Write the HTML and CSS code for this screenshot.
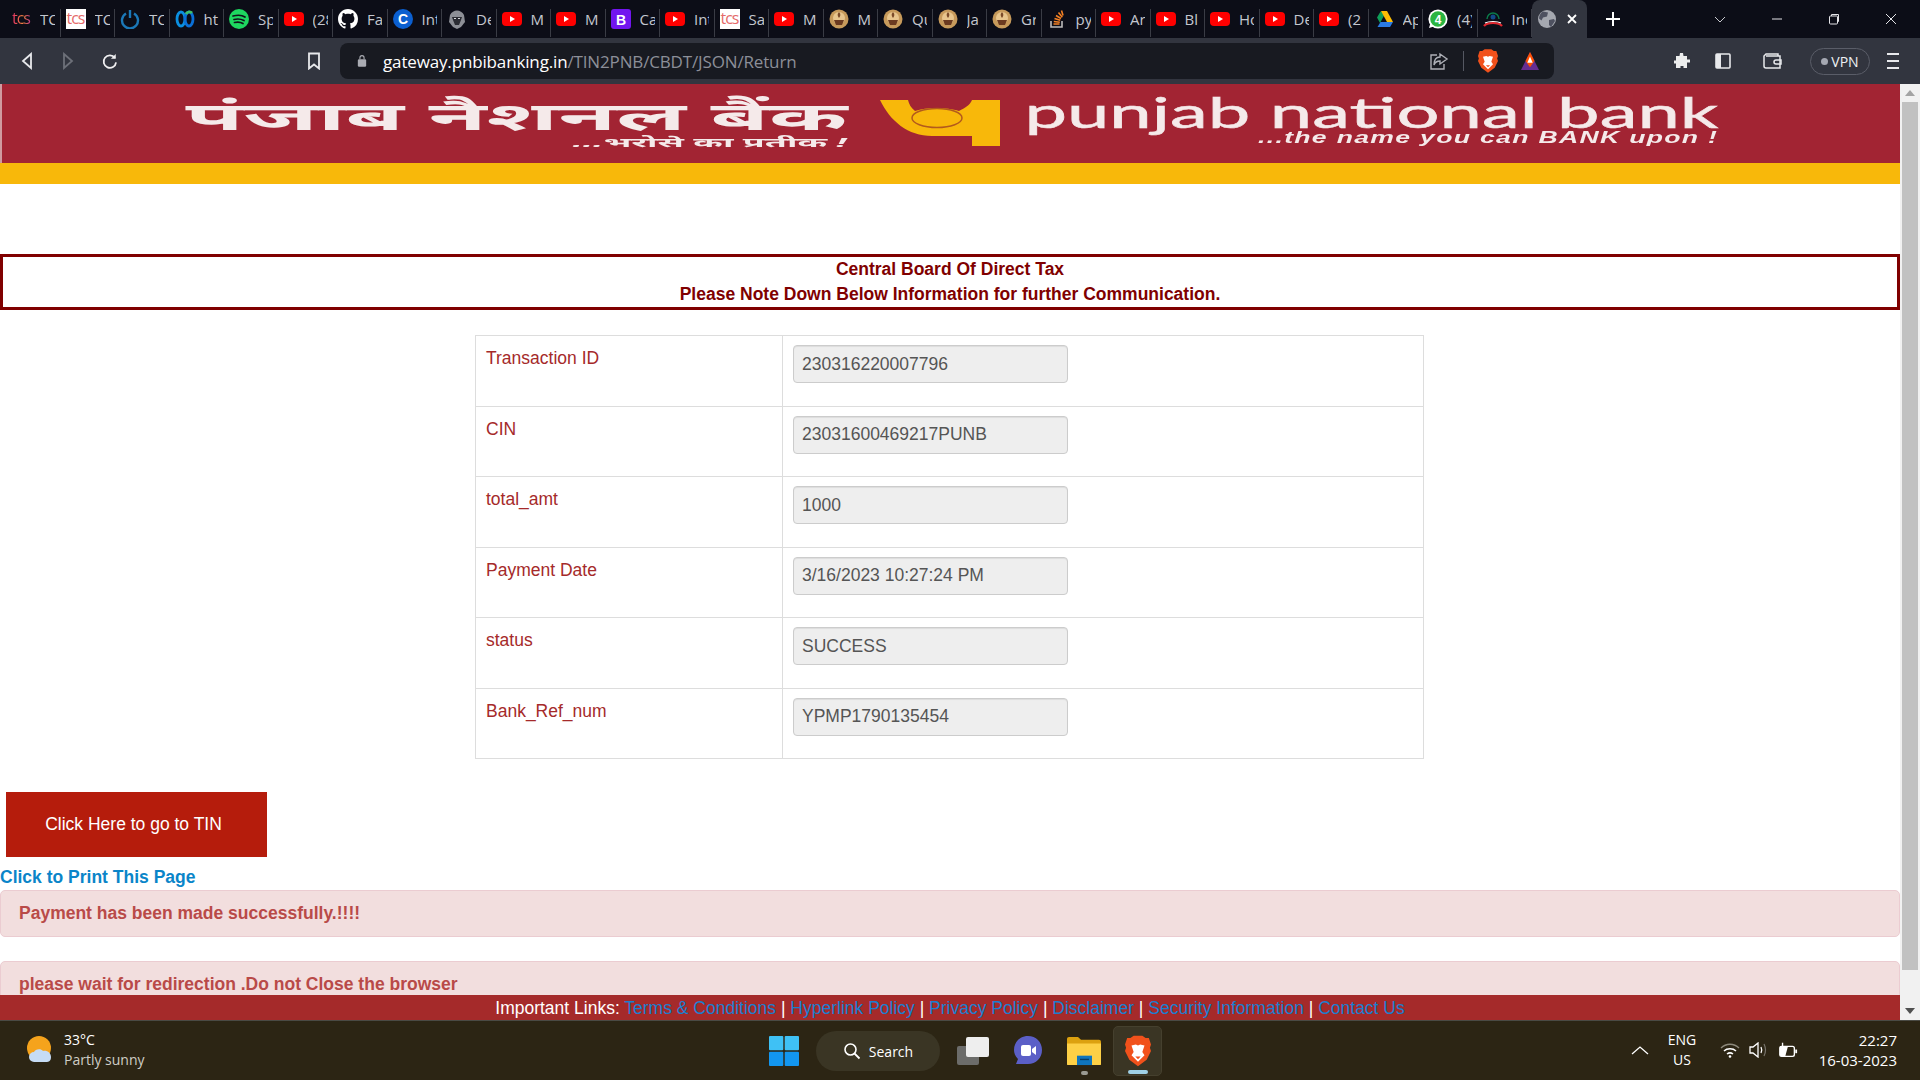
FILE: index.html
```html
<!DOCTYPE html>
<html lang="en">
<head>
    <meta charset="UTF-8">
    <title>Punjab National Bank - Return</title>
    <link rel="stylesheet" href="styles.css">
</head>
<body>
    <svg class="defs" width="0" height="0">
        <symbol id="yt" viewBox="0 0 20 20"><rect y="3" width="20" height="14" rx="4" fill="#f00"/><path d="M8 7l5 3-5 3z" fill="#fff"/></symbol>
        <symbol id="lamp" viewBox="0 0 20 20"><circle cx="10" cy="10" r="9.500" fill="#c79a5b"/><circle cx="10" cy="9" r="6" fill="#e8c58d"/><path d="M5 11h10l-2 5H7z" fill="#6b3a20"/><path d="M10 3c2 2 1.600 4 0 6-1.600-2-2-4 0-6z" fill="#7a4a28"/></symbol>
        <symbol id="github" viewBox="0 0 16 16"><path fill="#fff" d="M8 0C3.58 0 0 3.58 0 8c0 3.54 2.29 6.53 5.470 7.59.4.07.55-.17.55-.38 0-.19-.01-.82-.01-1.49-2.01.37-2.53-.49-2.69-.94-.09-.23-.48-.94-.82-1.13-.28-.15-.68-.52-.01-.53.63-.01 1.08.58 1.23.82.72 1.21 1.87.87 2.33.66.07-.52.28-.87.51-1.07-1.78-.2-3.64-.89-3.64-3.95 0-.87.31-1.59.82-2.15-.08-.2-.36-1.02.08-2.12 0 0 .67-.21 2.2.82.64-.18 1.32-.27 2-.27.68 0 1.36.09 2 .27 1.53-1.04 2.2-.82 2.2-.82.44 1.1.16 1.92.08 2.12.51.56.82 1.27.82 2.15 0 3.07-1.87 3.75-3.65 3.95.29.25.54.73.54 1.48 0 1.07-.01 1.93-.01 2.2 0 .21.15.46.55.38A8.013 8.013 0 0016 8c0-4.42-3.58-8-8-8z"/></symbol>
        <symbol id="brave" viewBox="0 0 24 28"><path d="M5 2l3-2h8l3 2h3l2 6-1 3 1 3-4 8-8 6-8-6-4-8 1-3-1-3 2-6z" fill="#f1511b"/><path d="M6 9l4-1 2 1 2-1 4 1-2 6 2 3-6 6-6-6 2-3z" fill="#fff"/><path d="M9.500 19h5L12 21.500z" fill="#f1511b"/></symbol>
    </svg>

    <div class="window">
        <div class="tabstrip">
            <div class="tab"><span class="tcs">tcs</span><span class="tab-title">TC</span></div>
            <div class="tab"><span class="tcs tcs-white">tcs</span><span class="tab-title">TC</span></div>
            <div class="tab"><svg class="fav" viewBox="0 0 20 20"><path d="M6 4.500a8 8 0 1 0 8 0" fill="none" stroke="#1b78b8" stroke-width="2.400"/><path d="M10 1v8" stroke="#1b78b8" stroke-width="2.400"/></svg><span class="tab-title">TC</span></div>
            <div class="tab"><svg class="fav" viewBox="0 0 20 20"><ellipse cx="6" cy="10" rx="4" ry="7" fill="none" stroke="#0b8fe0" stroke-width="2.800"/><ellipse cx="14" cy="10" rx="4" ry="7" fill="none" stroke="#0a6fd6" stroke-width="2.800"/><path d="M11 5c1-2 4-3 6-1" fill="none" stroke="#3fc06a" stroke-width="2.800"/></svg><span class="tab-title">ht</span></div>
            <div class="tab"><svg class="fav" viewBox="0 0 20 20"><circle cx="10" cy="10" r="10" fill="#1ed760"/><path d="M4 7c4-1 9-1 12 1M5 10.500c4-1 7-.5 10 1M5.500 13.500c3-.7 6-.5 8.500 1" fill="none" stroke="#10121a" stroke-width="1.700" stroke-linecap="round"/></svg><span class="tab-title">Sp</span></div>
            <div class="tab"><svg class="fav"><use href="#yt"/></svg><span class="tab-title">(28</span></div>
            <div class="tab"><svg class="fav"><use href="#github"/></svg><span class="tab-title">Fa</span></div>
            <div class="tab"><svg class="fav" viewBox="0 0 20 20"><circle cx="10" cy="10" r="10" fill="#0b5fd0"/><text x="10" y="15" class="fav-letter">C</text></svg><span class="tab-title">Int</span></div>
            <div class="tab"><svg class="fav" viewBox="0 0 20 20"><path d="M3 6c3-6 11-6 14 0l1 7-4 5-4 2-4-2-4-5z" fill="#8d8f96"/><path d="M5 8h10l-1 3-2 5H8l-2-5z" fill="#2b2c33"/><path d="M7 9.500h2M11 9.500h2" stroke="#d8d8dc"/></svg><span class="tab-title">De</span></div>
            <div class="tab"><svg class="fav"><use href="#yt"/></svg><span class="tab-title">M</span></div>
            <div class="tab"><svg class="fav"><use href="#yt"/></svg><span class="tab-title">M</span></div>
            <div class="tab"><svg class="fav" viewBox="0 0 20 20"><rect width="20" height="20" rx="3" fill="#7215ef"/><text x="10" y="15.500" class="fav-letter">B</text></svg><span class="tab-title">Ca</span></div>
            <div class="tab"><svg class="fav"><use href="#yt"/></svg><span class="tab-title">Int</span></div>
            <div class="tab"><span class="tcs tcs-white">tcs</span><span class="tab-title">Sa</span></div>
            <div class="tab"><svg class="fav"><use href="#yt"/></svg><span class="tab-title">M</span></div>
            <div class="tab"><svg class="fav"><use href="#lamp"/></svg><span class="tab-title">M</span></div>
            <div class="tab"><svg class="fav"><use href="#lamp"/></svg><span class="tab-title">Qu</span></div>
            <div class="tab"><svg class="fav"><use href="#lamp"/></svg><span class="tab-title">Ja</span></div>
            <div class="tab"><svg class="fav"><use href="#lamp"/></svg><span class="tab-title">Gr</span></div>
            <div class="tab"><svg class="fav" viewBox="0 0 20 20"><path d="M4 12v6h11v-6" fill="none" stroke="#bcbbbb" stroke-width="1.600"/><path d="M6.500 15h6M6.800 12.500l6 .8M7.500 9.500l5.800 1.800M9 6.500l5 3M11.500 3.500l3.800 4.800M14.500 1.500l1.500 5" stroke="#f48024" stroke-width="1.600" fill="none"/></svg><span class="tab-title">py</span></div>
            <div class="tab"><svg class="fav"><use href="#yt"/></svg><span class="tab-title">Ar</span></div>
            <div class="tab"><svg class="fav"><use href="#yt"/></svg><span class="tab-title">Bl</span></div>
            <div class="tab"><svg class="fav"><use href="#yt"/></svg><span class="tab-title">Ho</span></div>
            <div class="tab"><svg class="fav"><use href="#yt"/></svg><span class="tab-title">De</span></div>
            <div class="tab"><svg class="fav"><use href="#yt"/></svg><span class="tab-title">(2</span></div>
            <div class="tab"><svg class="fav" viewBox="0 0 20 20"><path d="M7 2h6l-3.500 6-3 5.500L3.500 8z" fill="#0f9d58" transform="translate(-.5 .5)"/><path d="M7 2h6l6 11h-6z" fill="#fbbc04"/><path d="M6.500 13H19l-3 5H3.500z" fill="#2b7be4"/></svg><span class="tab-title">Ap</span></div>
            <div class="tab"><svg class="fav" viewBox="0 0 20 20"><circle cx="10" cy="10" r="9.600" fill="#fff"/><circle cx="10" cy="10" r="7.800" fill="#2ab540"/><path d="M1 19l1.500-5 3.500 3.500z" fill="#fff"/><text x="10" y="14.500" class="fav-letter fav-small">4</text></svg><span class="tab-title">(4)</span></div>
            <div class="tab"><svg class="fav" viewBox="0 0 20 20"><path d="M4 10a6 6 0 0 1 12 0" fill="none" stroke="#0b7a4a" stroke-width="1.500"/><circle cx="10" cy="8" r="2.500" fill="#124a8a"/><path d="M1 17c3-4 15-4 18 0" fill="none" stroke="#e3262e" stroke-width="2.200"/><path d="M2 14c4-2 12-2 16 0" fill="none" stroke="#fff" stroke-width="1.200"/></svg><span class="tab-title">Inc</span></div>
            <div class="tab tab-active">
                <svg class="fav fav-globe" viewBox="0 0 20 20"><circle cx="10" cy="10" r="9" fill="#a5a8b0"/><path d="M6 2.500l5 1-1 4-4 1-1.500 3-2.500-2c0-3 2-6 4-7zM12 11l5-1 1 2-4 6-2-2z" fill="#4e5160"/></svg>
                <svg class="tab-close" viewBox="0 0 12 12"><path d="M2 2l8 8M10 2l-8 8" stroke="#fff" stroke-width="1.800"/></svg>
            </div>
            <svg class="newtab" viewBox="0 0 16 16"><path d="M8 1v14M1 8h14" stroke="#fff" stroke-width="2"/></svg>
            <div class="win-controls">
                <svg viewBox="0 0 12 12"><path d="M1 4l5 5 5-5" fill="none" stroke="#c8c9ce"/></svg>
                <svg viewBox="0 0 12 12"><path d="M1 6h10" stroke="#e4e4e8"/></svg>
                <svg viewBox="0 0 12 12"><rect x="1.500" y="3" width="8" height="8" rx="1" fill="none" stroke="#e4e4e8"/><path d="M3.500 3V1.500h7v7H9.500" fill="none" stroke="#e4e4e8"/></svg>
                <svg viewBox="0 0 12 12"><path d="M1 1l10 10M11 1L1 11" stroke="#e4e4e8"/></svg>
            </div>
        </div>

        <div class="toolbar">
            <div class="nav-btns">
                <svg viewBox="0 0 14 18"><path d="M11 2L3 9l8 7z" fill="none" stroke="#e8e9ec" stroke-width="1.800"/></svg>
                <svg viewBox="0 0 14 18"><path d="M3 2l8 7-8 7z" fill="none" stroke="#6d7079" stroke-width="1.800"/></svg>
                <svg class="reload" viewBox="0 0 18 18"><path d="M14.500 5.500a7 7 0 1 0 1.300 5" fill="none" stroke="#f0f0f2" stroke-width="2"/><path d="M15.500 1v5.500H10z" fill="#f0f0f2"/></svg>
            </div>
            <svg class="bookmark" viewBox="0 0 14 18"><path d="M2 1.500h10v15l-5-4-5 4z" fill="none" stroke="#e8e9ec" stroke-width="1.800"/></svg>
            <div class="urlbar">
                <svg class="lock" viewBox="0 0 12 16"><rect x="1" y="6" width="10" height="9" rx="1.500" fill="#aaacb3"/><path d="M3.500 6V4a2.500 2.500 0 0 1 5 0v2" fill="none" stroke="#aaacb3" stroke-width="1.300"/></svg>
                <span class="url"><span class="url-host">gateway.pnbibanking.in</span>/TIN2PNB/CBDT/JSON/Return</span>
                <svg class="share" viewBox="0 0 20 20"><path d="M8 4H2v14h13v-5" fill="none" stroke="#aeb0b7" stroke-width="1.400"/><path d="M11 3l7 5-7 5v-3c-3 0-5 1-6 4 0-5 2-8 6-8z" fill="none" stroke="#aeb0b7" stroke-width="1.400"/></svg>
                <span class="url-sep"></span>
                <svg class="shield"><use href="#brave"/></svg>
                <svg class="bat" viewBox="0 0 22 20"><path d="M11 0l10 20H1z" fill="#662d91"/><path d="M11 0l5 10 -5 7-5-7z" fill="#ff5000"/><path d="M11 5l3 7h-6z" fill="#fff"/></svg>
            </div>
            <div class="tool-right">
                <svg class="tool-icon" viewBox="0 0 18 18"><path d="M7 1h3l.5 3H14v3.500h3v3h-3V16h-3.500v-2h-3v2H3v-4.500H1v-3h2V4h3.500z" fill="#eceded"/></svg>
                <svg class="tool-icon" viewBox="0 0 18 18"><rect x="2" y="2" width="14" height="14" rx="1" fill="none" stroke="#e8e9ec" stroke-width="1.600"/><rect x="2" y="2" width="5" height="14" fill="#e8e9ec"/></svg>
                <svg class="tool-icon tool-wallet" viewBox="0 0 20 18"><path d="M3 4h14v12H3a2 2 0 0 1-2-2V4l2-2h12v2" fill="none" stroke="#e8e9ec" stroke-width="1.500"/><path d="M18 8h-5a2 2 0 0 0 0 4h5z" fill="none" stroke="#e8e9ec" stroke-width="1.500"/></svg>
                <div class="vpn"><span class="vpn-dot"></span>VPN</div>
                <div class="hamburger"><span></span><span></span><span></span></div>
            </div>
        </div>

        <div class="viewport">
            <div class="content">
                <div class="banner">
                    <div class="brand-hi">
                        <span class="brand-main">पंजाब नैशनल बैंक</span>
                        <span class="brand-tag">...भरोसे का प्रतीक !</span>
                    </div>
                    <svg class="pnb-logo" viewBox="0 0 120 48"><path d="M0 1h28c1 4 3 8 7 11 6-2 13-3 21-3s17 1 23 3c6-3 11-6 13-11h28v46H92V37H52C28 37 10 22 0 1z" fill="#f8b80a"/><ellipse cx="57" cy="19" rx="25" ry="9.500" fill="none" stroke="#b35a1c" stroke-width="1.500"/></svg>
                    <div class="brand-en">
                        <span class="brand-en-main">punjab national bank</span>
                        <span class="brand-en-tag">...the name you can BANK upon !</span>
                    </div>
                </div>
                <div class="banner-stripe"></div>

                <div class="notice">
                    <div>Central Board Of Direct Tax</div>
                    <div>Please Note Down Below Information for further Communication.</div>
                </div>

                <table class="details">
                    <tr><td class="lbl">Transaction ID</td><td><input class="field" value="230316220007796" readonly></td></tr>
                    <tr><td class="lbl">CIN</td><td><input class="field" value="23031600469217PUNB" readonly></td></tr>
                    <tr><td class="lbl">total_amt</td><td><input class="field" value="1000" readonly></td></tr>
                    <tr><td class="lbl">Payment Date</td><td><input class="field" value="3/16/2023 10:27:24 PM" readonly></td></tr>
                    <tr><td class="lbl">status</td><td><input class="field" value="SUCCESS" readonly></td></tr>
                    <tr><td class="lbl">Bank_Ref_num</td><td><input class="field" value="YPMP1790135454" readonly></td></tr>
                </table>

                <button class="tin-btn">Click Here to go to TIN</button>
                <a class="print-link" href="#">Click to Print This Page</a>
                <div class="alert">Payment has been made successfully.!!!!</div>
                <div class="alert alert-second">please wait for redirection .Do not Close the browser</div>

                <div class="page-footer">
                    Important Links: <a href="#">Terms &amp; Conditions</a> | <a href="#">Hyperlink Policy</a> | <a href="#">Privacy Policy</a> | <a href="#">Disclaimer</a> | <a href="#">Security Information</a> | <a href="#">Contact Us</a>
                </div>
            </div>
            <div class="scrollbar">
                <span class="arrow arrow-up"></span>
                <div class="thumb"></div>
                <span class="arrow arrow-down"></span>
            </div>
        </div>

        <div class="taskbar">
            <div class="weather">
                <svg viewBox="0 0 30 30" class="weather-icon"><circle cx="14" cy="13" r="12" fill="#f5a31c"/><path d="M9 27a5 5 0 0 1 0-10c1-3 7-4 9-1 4-1 8 2 8 6s-2 5-5 5z" fill="#c6dcf5"/></svg>
                <div class="weather-text">
                    <div>33°C</div>
                    <div class="weather-sub">Partly sunny</div>
                </div>
            </div>
            <div class="task-center">
                <svg class="start" viewBox="0 0 30 30"><g fill="#3fc1f5"><rect width="14.300" height="14.300" rx="1"/><rect x="15.700" width="14.300" height="14.300" rx="1"/></g><g fill="#1296f0"><rect y="15.700" width="14.300" height="14.300" rx="1"/><rect x="15.700" y="15.700" width="14.300" height="14.300" rx="1"/></g></svg>
                <div class="search-pill">
                    <svg viewBox="0 0 18 18"><circle cx="7.500" cy="7.500" r="5.500" fill="none" stroke="#fff" stroke-width="1.600"/><path d="M11.500 11.500L16.500 16.500" stroke="#fff" stroke-width="1.800"/></svg>
                    Search
                </div>
                <svg class="task-icon taskview" viewBox="0 0 32 28"><rect y="9" width="22" height="19" rx="2" fill="#6c6c6a"/><rect x="9" width="23" height="20" rx="2" fill="#eeeeee"/></svg>
                <svg class="task-icon meet" viewBox="0 0 28 30"><path d="M14 0c8 0 14 6 14 14s-6 14-14 14H2l2-5C1 20 0 17 0 14 0 6 6 0 14 0z" fill="#5b5fc7"/><rect x="7" y="9" width="10" height="11" rx="2" fill="#fff"/><path d="M18 13l4-3v9l-4-3z" fill="#fff"/></svg>
                <div class="task-slot">
                    <svg class="task-icon folder" viewBox="0 0 34 32" preserveAspectRatio="none"><path d="M0 3a2 2 0 0 1 2-2h9l3 3h18a2 2 0 0 1 2 2v6H0z" fill="#dca10f"/><path d="M0 8h34v22a1 1 0 0 1-1 1H1a1 1 0 0 1-1-1z" fill="#fdd046"/><rect x="10" y="21" width="15" height="10" fill="#0f75bd"/><path d="M13 25h9" stroke="#063d66" stroke-width="1.500"/></svg>
                    <span class="task-dot"></span>
                </div>
                <div class="task-slot task-active">
                    <svg class="task-icon shield-big"><use href="#brave"/></svg>
                    <span class="task-dot task-dot-on"></span>
                </div>
            </div>
            <div class="tray">
                <svg class="tray-chevron" viewBox="0 0 18 10"><path d="M1 9l8-7 8 7" fill="none" stroke="#fff" stroke-width="1.300"/></svg>
                <div class="lang"><div>ENG</div><div>US</div></div>
                <svg class="tray-icon" viewBox="0 0 20 16"><path d="M1 6c5-5 13-5 18 0" fill="none" stroke="#8d897c" stroke-width="1.300"/><path d="M4 9c3-3 9-3 12 0M7 12c2-1.500 4-1.500 6 0" fill="none" stroke="#fff" stroke-width="1.500"/><circle cx="10" cy="14.500" r="1.300" fill="#fff"/></svg>
                <svg class="tray-icon" viewBox="0 0 20 16"><path d="M1 5h3l5-4v14l-5-4H1z" fill="none" stroke="#fff" stroke-width="1.300"/><path d="M12 5c1 2 1 4 0 6" fill="none" stroke="#fff" stroke-width="1.300"/><path d="M15 2c2 4 2 8 0 12" fill="none" stroke="#77736a" stroke-width="1.200"/></svg>
                <svg class="tray-icon" viewBox="0 0 22 16"><rect x="2" y="4" width="16" height="11" rx="2" fill="none" stroke="#fff" stroke-width="1.500"/><path d="M2 4h9l-3 11H4a2 2 0 0 1-2-2z" fill="#fff"/><rect x="19" y="7.500" width="2" height="4" fill="#fff"/><path d="M5 0v4" stroke="#fff" stroke-width="1.500"/></svg>
                <div class="clock"><div>22:27</div><div>16-03-2023</div></div>
            </div>
        </div>
    </div>
</body>
</html>
```
FILE: styles.css
```css
* {
    margin: 0;
    padding: 0;
    box-sizing: border-box;
}
body {
    background: #fff;
    font-family: "Liberation Sans", Arial, sans-serif;
    overflow: hidden;
}
.defs {
    position: absolute;
}
.window {
    width: 1920px;
    height: 1080px;
    display: flex;
    flex-direction: column;
}

/* tab strip */
.tabstrip {
    height: 38px;
    background: #0c0d17;
    display: flex;
    align-items: stretch;
    padding-left: 6px;
}
.tab {
    width: 54.500px;
    display: flex;
    align-items: center;
    padding: 0 5px;
    position: relative;
    color: #c4c7cf;
    flex: none;
}
.tab::after {
    content: "";
    position: absolute;
    right: 0;
    top: 9px;
    bottom: 1px;
    width: 1px;
    background: #3a3c45;
}
.fav {
    width: 20px;
    height: 20px;
    flex: none;
}
.fav-letter {
    font: bold 14px "Liberation Sans", sans-serif;
    fill: #fff;
    text-anchor: middle;
}
.fav-small {
    font-size: 12px;
}
.tab-title {
    font: 15px "Open Sans", sans-serif;
    width: 15px;
    margin-left: 9px;
    overflow: hidden;
    white-space: nowrap;
}
.tcs {
    width: 20px;
    height: 20px;
    flex: none;
    font: 16px/19px "Open Sans", sans-serif;
    letter-spacing: -1px;
    text-align: center;
    overflow: hidden;
    background: linear-gradient(90deg, #e3286b, #f0823c 60%, #b6308d);
    background-clip: text;
    -webkit-background-clip: text;
    color: transparent;
}
.tcs-white {
    background: #fff;
    color: #e56a6a;
}
.tab-active {
    width: 55px;
    background: #32353f;
    border-radius: 8px 8px 0 0;
}
.tab-active::after {
    display: none;
}
.tab-close {
    width: 12px;
    height: 12px;
    margin-left: 9px;
}
.newtab {
    width: 16px;
    height: 16px;
    align-self: center;
    margin-left: 18px;
}
.win-controls {
    margin-left: auto;
    display: flex;
    align-items: center;
    gap: 45px;
    padding-right: 23px;
}
.win-controls svg {
    width: 12px;
    height: 12px;
}

/* toolbar */
.toolbar {
    height: 46px;
    background: #32353f;
    display: flex;
    align-items: center;
}
.nav-btns {
    display: flex;
    gap: 27px;
    padding-left: 20px;
    align-items: center;
}
.nav-btns svg {
    width: 14px;
    height: 18px;
}
.nav-btns .reload {
    width: 16px;
}
.bookmark {
    width: 14px;
    height: 18px;
    margin-left: 189px;
}
.urlbar {
    width: 1214px;
    height: 36px;
    margin-left: 19px;
    background: #181a21;
    border-radius: 8px;
    display: flex;
    align-items: center;
    padding-left: 17px;
}
.lock {
    width: 10px;
    height: 14px;
}
.url {
    font: 17px "Open Sans", sans-serif;
    color: #8c8f98;
    margin-left: 16px;
    letter-spacing: -0.150px;
}
.url-host {
    color: #fff;
}
.share {
    width: 20px;
    height: 20px;
    margin-left: auto;
}
.url-sep {
    width: 1px;
    height: 20px;
    background: #555862;
    margin-left: 14px;
}
.shield {
    width: 20px;
    height: 24px;
    margin-left: 14px;
}
.bat {
    width: 20px;
    height: 18px;
    margin-left: 22px;
    margin-right: 14px;
}
.tool-right {
    display: flex;
    align-items: center;
    margin-left: 119px;
}
.tool-icon {
    width: 18px;
    height: 18px;
    margin-right: 23px;
}
.tool-wallet {
    width: 20px;
    margin-left: 8px;
    margin-right: 27px;
}
.vpn {
    width: 60px;
    height: 27px;
    border: 1px solid #5a5d68;
    border-radius: 14px;
    display: flex;
    align-items: center;
    justify-content: center;
    gap: 3px;
    font: 14px "Open Sans", sans-serif;
    color: #eef0f4;
}
.vpn-dot {
    width: 7px;
    height: 7px;
    border-radius: 50%;
    background: #a5a8b2;
}
.hamburger {
    width: 12px;
    margin-left: 17px;
    display: flex;
    flex-direction: column;
    gap: 5px;
}
.hamburger span {
    height: 2px;
    background: #e8e9ec;
}

/* page */
.viewport {
    flex: 1;
    display: flex;
    min-height: 0;
}
.content {
    width: 1900px;
    position: relative;
    overflow: hidden;
}
.banner {
    height: 79px;
    background: #a22433;
    display: flex;
    align-items: flex-start;
    padding-left: 183px;
    border-left: 2px solid #d09aa0;
    color: #f5eaea;
}
.brand-hi {
    width: 662px;
    display: flex;
    flex-direction: column;
    align-items: flex-end;
    padding-top: 12px;
}
.brand-main {
    font: bold 38px/38px "Noto Sans", "DejaVu Sans", sans-serif;
    white-space: nowrap;
    transform: scaleX(2.485);
    transform-origin: right center;
}
.brand-tag {
    font: italic bold 13px/16px "Noto Sans", sans-serif;
    transform: scaleX(2.750);
    transform-origin: right center;
}
.pnb-logo {
    width: 120px;
    height: 48px;
    margin: 15px 0 0 33px;
    flex: none;
}
.brand-en {
    margin-left: 26px;
    width: 692px;
    display: flex;
    flex-direction: column;
    align-items: flex-end;
    padding-top: 8px;
}
.brand-en-main {
    font: 42px/41px "Lato", sans-serif;
    -webkit-text-stroke: 0.500px #f5eaea;
    white-space: nowrap;
    transform: scaleX(1.810);
    transform-origin: right center;
}
.brand-en-tag {
    font: italic bold 16px/10px "Liberation Sans", sans-serif;
    letter-spacing: 0.800px;
    transform: scaleX(1.660);
    transform-origin: right center;
}
.banner-stripe {
    height: 21px;
    background: #f8b80a;
}
.notice {
    margin-top: 70px;
    height: 56px;
    border: 3px solid #800000;
    color: #800000;
    font-weight: bold;
    font-size: 17.500px;
    line-height: 25px;
    text-align: center;
}
.details {
    width: 949px;
    margin: 25px 0 0 475px;
    border-collapse: collapse;
    table-layout: fixed;
    color: #a52a2a;
    font-size: 17.500px;
}
.details td {
    height: 70.500px;
    border: 1px solid #ddd;
    padding: 9px 10px 10px;
    vertical-align: top;
}
.details .lbl {
    width: 307px;
    padding-top: 12px;
}
.field {
    display: block;
    width: 275px;
    height: 38px;
    background: #eee;
    border: 1px solid #ccc;
    border-radius: 4px;
    box-shadow: inset 0 1px 1px rgba(0, 0, 0, .075);
    padding: 0 8px;
    font: 17.500px "Liberation Sans", sans-serif;
    color: #555;
}
.tin-btn {
    display: block;
    width: 261px;
    height: 65px;
    margin: 33px 0 0 6px;
    background: #b51c0c;
    border: 0;
    color: #fff;
    font: 17.500px "Liberation Sans", sans-serif;
    padding-right: 6px;
}
.print-link {
    display: block;
    margin-top: 8px;
    font-weight: bold;
    font-size: 17.500px;
    line-height: 25px;
    color: #0a85c9;
    text-decoration: none;
}
.alert {
    height: 47px;
    background: #f2dede;
    border: 1px solid #ebccd1;
    border-radius: 5px;
    color: #b94a48;
    font-weight: bold;
    font-size: 17.500px;
    line-height: 44px;
    padding-left: 18px;
}
.alert-second {
    margin-top: 24px;
    height: 60px;
}
.page-footer {
    position: absolute;
    left: 0;
    right: 0;
    bottom: 0;
    height: 25px;
    background: #a52a2a;
    color: #fff;
    font-size: 17.500px;
    line-height: 27px;
    text-align: center;
}
.page-footer a {
    color: #1a7fd0;
    text-decoration: none;
}

/* scrollbar */
.scrollbar {
    width: 20px;
    background: #f1f1f1;
    display: flex;
    flex-direction: column;
    align-items: center;
    padding: 6px 2px;
}
.thumb {
    width: 16px;
    flex: 1;
    margin: 6px 0 38px;
    background: #c1c1c1;
}
.arrow {
    width: 0;
    height: 0;
    border-left: 5px solid transparent;
    border-right: 5px solid transparent;
}
.arrow-up {
    border-bottom: 6px solid #a3a3a3;
}
.arrow-down {
    border-top: 6px solid #505050;
}

/* taskbar */
.taskbar {
    height: 60px;
    background: #2c2514;
    border-top: 1px solid #4a4a44;
    display: flex;
    align-items: center;
    padding-bottom: 2px;
    position: relative;
    color: #fff;
    font: 14px "Open Sans", sans-serif;
}
.weather {
    display: flex;
    align-items: center;
    padding-left: 25px;
    gap: 9px;
}
.weather-icon {
    width: 30px;
    height: 30px;
}
.weather-text {
    line-height: 20px;
}
.weather-sub {
    color: #cfcdc6;
}
.task-center {
    position: absolute;
    left: 769px;
    top: 5px;
    display: flex;
    align-items: center;
    height: 50px;
}
.start {
    width: 30px;
    height: 30px;
}
.search-pill {
    width: 124px;
    height: 40px;
    margin-left: 17px;
    border-radius: 20px;
    background: #3a3524;
    display: flex;
    align-items: center;
    justify-content: center;
    gap: 8px;
}
.search-pill svg {
    width: 18px;
    height: 18px;
}
.task-icon {
    flex: none;
}
.taskview {
    width: 32px;
    height: 28px;
    margin-left: 17px;
}
.meet {
    width: 28px;
    height: 30px;
    margin-left: 25px;
}
.task-slot {
    width: 36px;
    height: 50px;
    display: flex;
    flex-direction: column;
    align-items: center;
    justify-content: center;
    margin-left: 24px;
    position: relative;
}
.folder {
    width: 34px;
    height: 30px;
}
.task-dot {
    position: absolute;
    bottom: 1px;
    width: 7px;
    height: 4px;
    border-radius: 2px;
    background: #9a9a92;
}
.task-active {
    width: 49px;
    margin-left: 11px;
    background: #3a3524;
    border: 1px solid #45402e;
    border-radius: 5px;
}
.shield-big {
    width: 26px;
    height: 32px;
}
.task-dot-on {
    width: 20px;
    background: #9fd0e6;
}
.tray {
    margin-left: auto;
    display: flex;
    align-items: center;
    padding-right: 23px;
}
.tray-chevron {
    width: 18px;
    height: 10px;
    margin-right: 15px;
}
.lang {
    width: 36px;
    text-align: center;
    line-height: 20px;
    margin-right: 20px;
}
.tray-icon {
    width: 20px;
    height: 16px;
    margin-right: 9px;
}
.clock {
    width: 90px;
    text-align: right;
    font-size: 15px;
    line-height: 20px;
}
```
